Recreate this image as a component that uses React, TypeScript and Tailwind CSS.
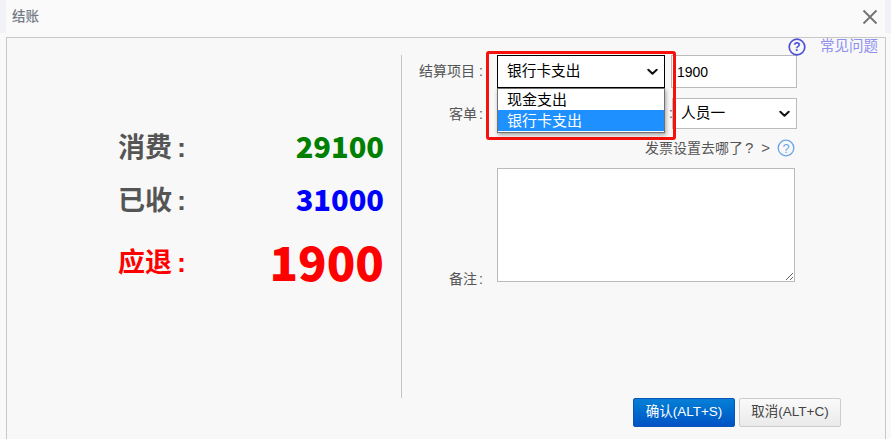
import React from "react";

const cjk = "font-['Liberation_Sans','Noto_Sans_CJK_SC',sans-serif]";

function Stat({ label, value, labelCls, valueCls, rowCls }: { label: string; value: string; labelCls: string; valueCls: string; rowCls: string }) {
  return (
    <div className={`flex items-center justify-between ${rowCls}`}>
      <span className={`font-bold text-[27px] leading-none mt-[6px] ${labelCls}`}>{label}<span className="ml-[5px]">:</span></span>
      <span className={`font-black font-['Noto_Sans_CJK_SC',sans-serif] leading-none ${valueCls}`}>{value}</span>
    </div>
  );
}

function Chevron() {
  return (
    <svg width="11" height="7" viewBox="0 0 11 7" className="absolute right-[7px] top-1/2 -translate-y-1/2 pointer-events-none">
      <path d="M1.3 1.3 L5.5 5.3 L9.7 1.3" stroke="#111" strokeWidth="2" fill="none" strokeLinecap="round" strokeLinejoin="round" />
    </svg>
  );
}

export default function App() {
  return (
    <div className={`relative w-[891px] h-[439px] overflow-hidden bg-[#f9f9f9] text-[14px] text-[#555] ${cjk}`}>
      <header className="h-[33px] mb-[4px] flex items-center justify-between pl-[6px] pr-[7px] bg-[#fafafa] border-x-[6px] border-x-[#f1f2f6]">
        <span className="text-[13.5px] text-[#767c86] font-medium mt-[2px]">结账</span>
        <svg width="16" height="16" viewBox="0 0 16 16" className="text-[#727272]">
          <path d="M1.5 1.5 L14.5 14.5 M14.5 1.5 L1.5 14.5" stroke="currentColor" strokeWidth="1.8" fill="none" />
        </svg>
      </header>

      <main className="relative ml-[6px] w-[880px] h-[402px] border border-[#c8c8c8] border-b-0 bg-[#f8f8f8]">
        <div className="absolute right-[7px] top-0 flex items-center h-[17px] gap-[14px]">
          <svg width="18" height="18" viewBox="0 0 18 18">
            <circle cx="9" cy="9" r="7.8" fill="none" stroke="#4a50d8" strokeWidth="1.7" />
            <text x="9" y="13.2" textAnchor="middle" fontSize="12" fontWeight="700" fill="#4a50d8" fontFamily="Liberation Sans">?</text>
          </svg>
          <span className="text-[14.5px] text-[#8f8ff0]">常见问题</span>
        </div>

        <div className="flex mt-[17px] h-[343px]">
          <section className="box-border w-[395px] shrink-0 pl-[111px] pr-[17px] pt-[75px] flex flex-col border-r border-[#c4c4c4]">
            <Stat label="消费" value="29100" labelCls="text-[#555]" valueCls="text-[29px] text-[#008000]" rowCls="h-[30px]" />
            <Stat label="已收" value="31000" labelCls="text-[#555]" valueCls="text-[29px] text-[#0000ff]" rowCls="h-[30px] mt-[23px]" />
            <Stat label="应退" value="1900" labelCls="text-[#ff0000]" valueCls="text-[47px] text-[#ff0000]" rowCls="h-[48px] mt-[23px]" />
          </section>

          <section className="flex-1 flex flex-col">
            <div className="flex items-center h-[33px]">
              <label className="w-[81px] text-right">结算项目<span className="ml-[4px]">:</span></label>
              <div className="relative ml-[14px] w-[168px] h-[33px]">
                <select defaultValue="b" className="appearance-none w-full h-full pl-[9px] border border-black bg-white text-black text-[14.7px] rounded-none">
                  <option value="a">现金支出</option>
                  <option value="b">银行卡支出</option>
                </select>
                <Chevron />
              </div>
              <input defaultValue="1900" className="ml-[6px] w-[126px] h-[33px] px-[5px] border border-[#bbb] bg-white text-black" />
            </div>
            <div className="flex items-center h-[31px] mt-[10px]">
              <label className="w-[81px] text-right pt-[1px]">客单<span className="ml-[2px]">:</span></label>
              <div className="ml-[14px] w-[168px] h-[31px]" />
              <span className="ml-[4px] w-[3px]">:</span>
              <div className="relative w-[125px] h-[31px]">
                <select defaultValue="1" className="appearance-none w-full h-full pl-[8px] border border-[#bbb] bg-white text-black text-[14.7px] rounded-none">
                  <option value="1">人员一</option>
                </select>
                <Chevron />
              </div>
            </div>
            <div className="flex items-center justify-end h-[20px] mt-[9px] w-[393px] gap-[7px]">
              <span className="flex items-center">发票设置去哪了<span className="text-[15px] ml-[2px]">?</span><span className="ml-[8px] text-[15px]">&gt;</span></span>
              <svg width="18" height="18" viewBox="0 0 18 18">
                <circle cx="9" cy="9" r="7.8" fill="none" stroke="#6aa5ea" strokeWidth="1.3" />
                <text x="9" y="13.5" textAnchor="middle" fontSize="13" fill="#6aa5ea" fontFamily="Liberation Sans">?</text>
              </svg>
            </div>
            <div className="flex items-end mt-[10px]">
              <label className="w-[81px] text-right leading-[20px] mb-[-7px]">备注<span className="ml-[2px]">:</span></label>
              <textarea className="ml-[14px] w-[298px] h-[114px] border border-[#bbb] bg-white resize-y block" />
            </div>
          </section>
        </div>

        <div className="flex justify-end gap-[4px] pr-[44px]">
          <button className="w-[102px] h-[29px] rounded-[2px] border border-[#0a55b8] bg-gradient-to-b from-[#0780d6] to-[#0152c4] text-white text-[13.5px]">确认(ALT+S)</button>
          <button className="w-[102px] h-[29px] rounded-[2px] border border-[#ccc] bg-gradient-to-b from-[#fafafa] to-[#eaeaea] text-[#444] text-[13.5px]">取消(ALT+C)</button>
        </div>
      </main>

      <div className="absolute left-[486px] top-[51px] w-[190px] h-[89px] border-[3px] border-[#f5120c] rounded-[3px]" />
      <div className="absolute left-[497px] top-[88px] w-[168px] h-[45px] border border-[#707070] bg-white text-black text-[15px] shadow-[1px_2px_4px_rgba(0,0,0,0.35)]">
        <div className="h-[21px] pl-[9px] leading-[21px]">现金支出</div>
        <div className="h-[21px] pl-[9px] leading-[21px] bg-[#1e90ff] text-white">银行卡支出</div>
      </div>
    </div>
  );
}
